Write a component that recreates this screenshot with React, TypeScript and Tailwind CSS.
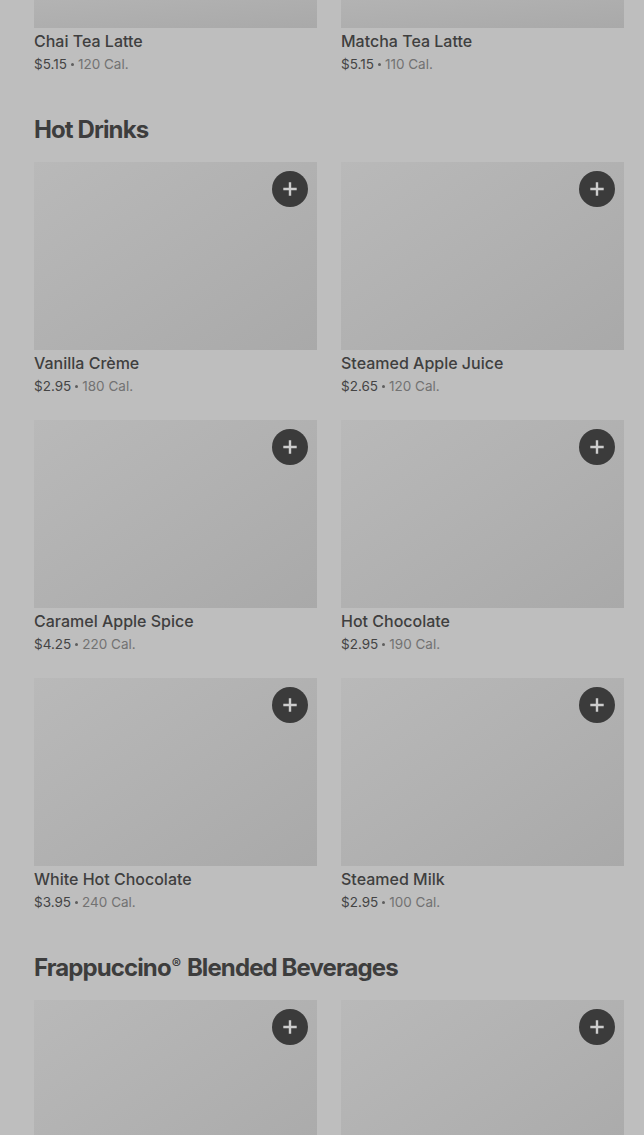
import React from 'react';

type Item = { name: string; price: string; cal: string };

const PlusIcon = () => (
    <svg className="w-[14px] h-[14px]" viewBox="0 0 14 14" fill="none" stroke="currentColor" strokeWidth={2.4} strokeLinecap="square">
        <path d="M7 1.5v11M1.5 7h11" />
    </svg>
);

const Meta: React.FC<{ item: Item }> = ({ item }) => (
    <div className="pt-[3px]">
        <div className="text-[16px] leading-5 font-medium text-[#3f3f3f]">{item.name}</div>
        <div className="mt-[3px] h-5 flex items-center text-[13.5px] leading-5 text-[#727272]">
            <span className="text-[#444444]">{item.price}</span>
            <span className="w-[3px] h-[3px] rounded-full bg-[#5e5e5e] mx-[4px]" />
            <span>{item.cal}</span>
        </div>
    </div>
);

const ItemCard: React.FC<{ item?: Item }> = ({ item }) => (
    <div className="flex flex-col">
        <div className="relative w-full h-[188px] bg-gradient-to-br from-[#b9b9b9] to-[#a9a9a9]">
            <button className="absolute top-[9px] right-[9px] w-9 h-9 rounded-full bg-[#3b3b3b] text-[#cdcdcd] flex items-center justify-center">
                <PlusIcon />
            </button>
        </div>
        {item && <Meta item={item} />}
    </div>
);

const Section: React.FC<{ title: React.ReactNode; items: (Item | undefined)[] }> = ({ title, items }) => (
    <section className="mt-10">
        <h2 className="h-8 text-[24px] leading-8 font-bold tracking-[-0.9px] text-[#3d3d3d] mb-4">{title}</h2>
        <div className="grid grid-cols-2 gap-x-6 gap-y-6">
            {items.map((it, i) => (
                <ItemCard key={i} item={it} />
            ))}
        </div>
    </section>
);

const hotDrinks: Item[] = [
    { name: 'Vanilla Crème', price: '$2.95', cal: '180 Cal.' },
    { name: 'Steamed Apple Juice', price: '$2.65', cal: '120 Cal.' },
    { name: 'Caramel Apple Spice', price: '$4.25', cal: '220 Cal.' },
    { name: 'Hot Chocolate', price: '$2.95', cal: '190 Cal.' },
    { name: 'White Hot Chocolate', price: '$3.95', cal: '240 Cal.' },
    { name: 'Steamed Milk', price: '$2.95', cal: '100 Cal.' },
];

const teaLattes: Item[] = [
    { name: 'Chai Tea Latte', price: '$5.15', cal: '120 Cal.' },
    { name: 'Matcha Tea Latte', price: '$5.15', cal: '110 Cal.' },
];

export default function App() {
    return (
        <div className="w-[644px] h-[1135px] overflow-hidden bg-[#bebebe]" style={{ fontFamily: 'Inter, "Noto Sans", sans-serif' }}>
            <div className="pl-[34px] pr-5">
                {/* tail of the previous section, scrolled past */}
                <div className="grid grid-cols-2 gap-x-6">
                    {teaLattes.map((it) => (
                        <div key={it.name} className="flex flex-col">
                            <div className="h-[28px] bg-gradient-to-br from-[#b3b3b3] to-[#a9a9a9]" />
                            <Meta item={it} />
                        </div>
                    ))}
                </div>
                <Section title="Hot Drinks" items={hotDrinks} />
                <Section
                    title={
                        <>
                            Frappuccino<span className="relative -top-[7px] text-[14px] ml-[1px] mr-[2px]">®</span> Blended Beverages
                        </>
                    }
                    items={[undefined, undefined]}
                />
            </div>
        </div>
    );
}
